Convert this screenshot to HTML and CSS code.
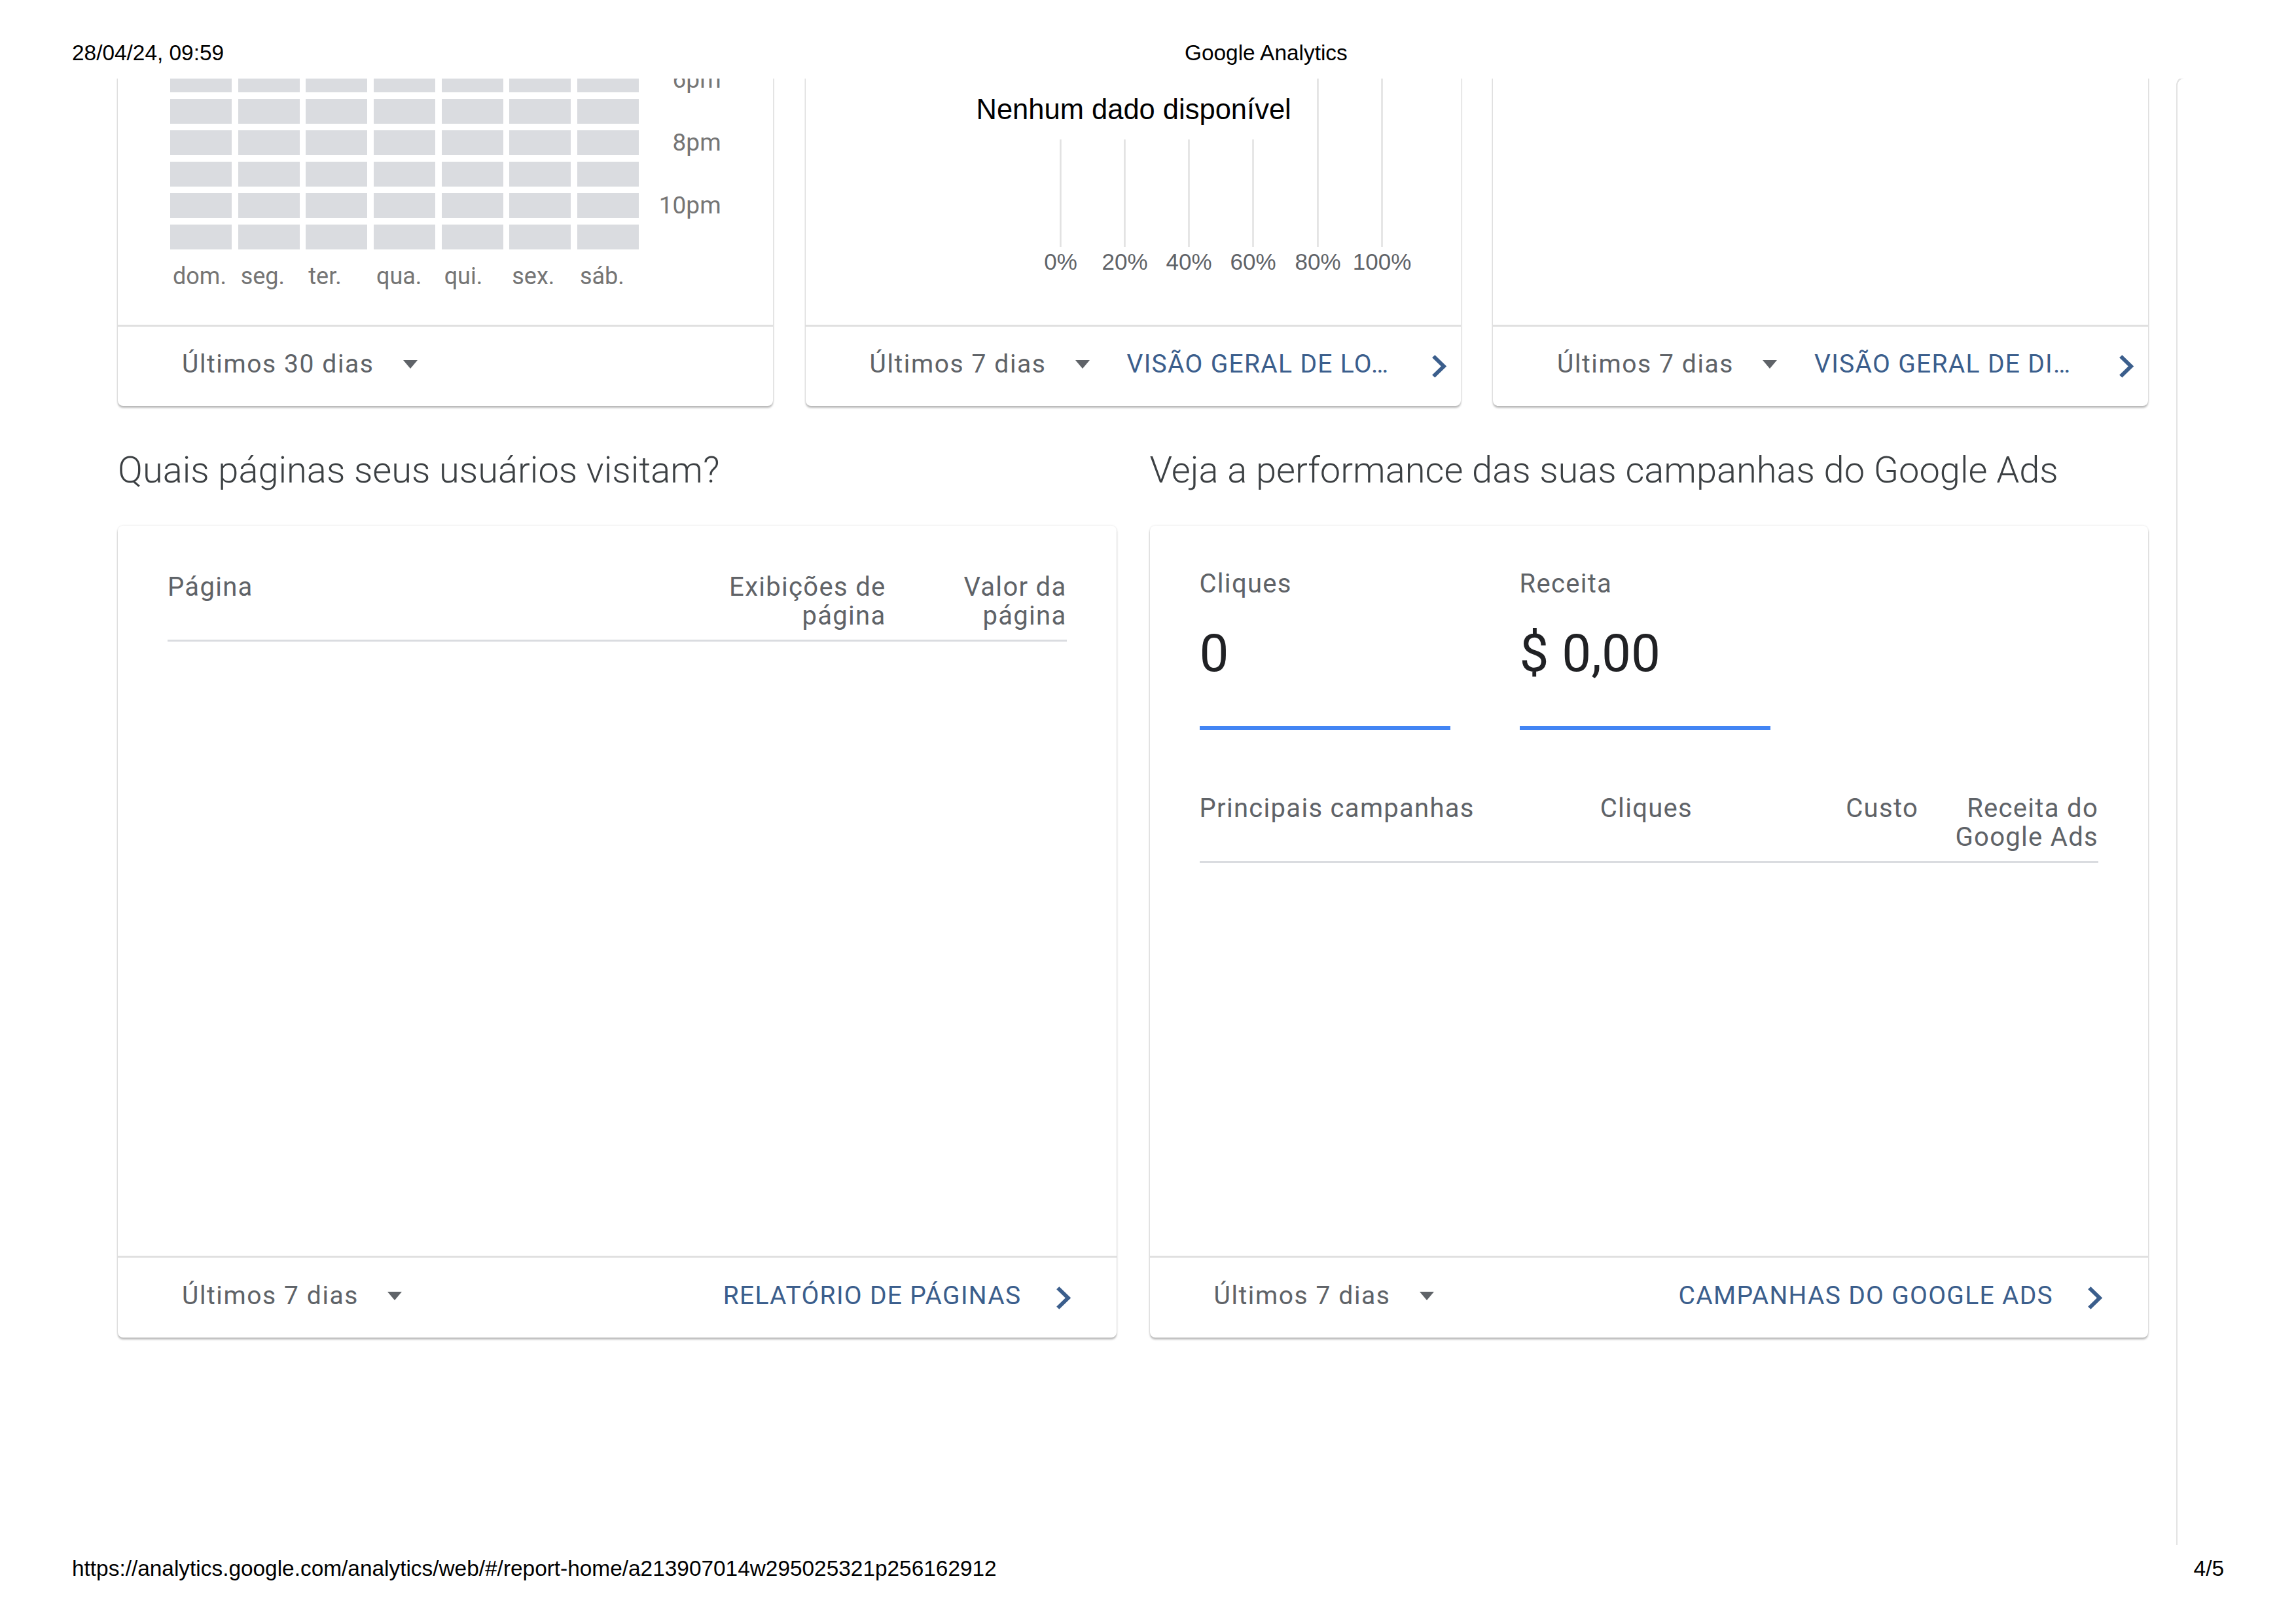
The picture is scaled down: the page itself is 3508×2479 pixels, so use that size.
FILE: index.html
```html
<!DOCTYPE html>
<html lang="pt-BR">
<head>
<meta charset="utf-8">
<title>Google Analytics</title>
<link rel="stylesheet" href="styles.css">
</head>
<body>
<header class="print-head">
  <span>28/04/24, 09:59</span>
  <span>Google Analytics</span>
</header>

<div class="viewport">
  <main class="dashboard">
    <section class="row-top">
      <article class="card">
        <div class="card-body heat-body">
          <div class="heat">
            <i class="cell"></i><i class="cell"></i><i class="cell"></i><i class="cell"></i><i class="cell"></i><i class="cell"></i><i class="cell"></i><span class="hour"></span>
            <i class="cell"></i><i class="cell"></i><i class="cell"></i><i class="cell"></i><i class="cell"></i><i class="cell"></i><i class="cell"></i><span class="hour"></span>
            <i class="cell"></i><i class="cell"></i><i class="cell"></i><i class="cell"></i><i class="cell"></i><i class="cell"></i><i class="cell"></i><span class="hour">6pm</span>
            <i class="cell"></i><i class="cell"></i><i class="cell"></i><i class="cell"></i><i class="cell"></i><i class="cell"></i><i class="cell"></i><span class="hour"></span>
            <i class="cell"></i><i class="cell"></i><i class="cell"></i><i class="cell"></i><i class="cell"></i><i class="cell"></i><i class="cell"></i><span class="hour">8pm</span>
            <i class="cell"></i><i class="cell"></i><i class="cell"></i><i class="cell"></i><i class="cell"></i><i class="cell"></i><i class="cell"></i><span class="hour"></span>
            <i class="cell"></i><i class="cell"></i><i class="cell"></i><i class="cell"></i><i class="cell"></i><i class="cell"></i><i class="cell"></i><span class="hour">10pm</span>
            <i class="cell"></i><i class="cell"></i><i class="cell"></i><i class="cell"></i><i class="cell"></i><i class="cell"></i><i class="cell"></i><span class="hour"></span>
          </div>
          <div class="days">
            <span>dom.</span><span>seg.</span><span>ter.</span><span>qua.</span><span>qui.</span><span>sex.</span><span>sáb.</span>
          </div>
        </div>
        <footer class="card-foot">
          <div class="range"><span class="range-text">Últimos 30 dias</span><i class="caret"></i></div>
        </footer>
      </article>

      <article class="card">
        <div class="card-body chart-body">
          <svg class="bar-chart" width="1001" height="537" viewBox="0 0 1001 537">
            <g stroke="#e0e0e0" stroke-width="2.5">
              <line x1="389.5" y1="0" x2="389.5" y2="418"/>
              <line x1="487.5" y1="0" x2="487.5" y2="418"/>
              <line x1="585.5" y1="0" x2="585.5" y2="418"/>
              <line x1="683.5" y1="0" x2="683.5" y2="418"/>
              <line x1="782.5" y1="0" x2="782.5" y2="418"/>
              <line x1="880.5" y1="0" x2="880.5" y2="418"/>
            </g>
            <rect x="240" y="0" width="520" height="254" fill="#fff"/>
            <text class="chart-empty" x="260.5" y="223">Nenhum dado disponível</text>
            <g class="chart-axis" text-anchor="middle">
              <text x="389.5" y="453">0%</text>
              <text x="487.5" y="453">20%</text>
              <text x="585.5" y="453">40%</text>
              <text x="683.5" y="453">60%</text>
              <text x="782.5" y="453">80%</text>
              <text x="880.5" y="453">100%</text>
            </g>
          </svg>
        </div>
        <footer class="card-foot">
          <div class="range"><span class="range-text">Últimos 7 dias</span><i class="caret"></i></div>
          <a class="link link-trunc">VISÃO GERAL DE LO…</a>
          <svg class="chev chev-end" viewBox="8.2 5.6 8.4 12.8" preserveAspectRatio="none"><path d="M10 6L8.59 7.41 13.17 12l-4.58 4.59L10 18l6-6z"/></svg>
        </footer>
      </article>

      <article class="card">
        <div class="card-body"></div>
        <footer class="card-foot">
          <div class="range"><span class="range-text">Últimos 7 dias</span><i class="caret"></i></div>
          <a class="link link-trunc">VISÃO GERAL DE DI…</a>
          <svg class="chev chev-end" viewBox="8.2 5.6 8.4 12.8" preserveAspectRatio="none"><path d="M10 6L8.59 7.41 13.17 12l-4.58 4.59L10 18l6-6z"/></svg>
        </footer>
      </article>
    </section>

    <section class="row-bottom">
      <div class="col">
        <h2 class="section-title">Quais páginas seus usuários visitam?</h2>
        <article class="card">
          <div class="card-body big-body pages-body">
            <div class="thead pages-head">
              <span>Página</span>
              <span class="th-num">Exibições de página</span>
              <span class="th-num th-pad">Valor da página</span>
            </div>
          </div>
          <footer class="card-foot">
            <div class="range"><span class="range-text">Últimos 7 dias</span><i class="caret"></i></div>
            <a class="link link-end">RELATÓRIO DE PÁGINAS</a>
            <svg class="chev chev-after" viewBox="8.2 5.6 8.4 12.8" preserveAspectRatio="none"><path d="M10 6L8.59 7.41 13.17 12l-4.58 4.59L10 18l6-6z"/></svg>
          </footer>
        </article>
      </div>

      <div class="col">
        <h2 class="section-title">Veja a performance das suas campanhas do Google Ads</h2>
        <article class="card">
          <div class="card-body big-body ads-body">
            <div class="scorecards">
              <div class="score">
                <div class="score-label">Cliques</div>
                <div class="score-value">0</div>
                <div class="score-bar"></div>
              </div>
              <div class="score">
                <div class="score-label">Receita</div>
                <div class="score-value">$ 0,00</div>
                <div class="score-bar"></div>
              </div>
            </div>
            <div class="thead ads-head">
              <span>Principais campanhas</span>
              <span class="th-num">Cliques</span>
              <span class="th-num">Custo</span>
              <span class="th-num">Receita do Google Ads</span>
            </div>
          </div>
          <footer class="card-foot">
            <div class="range"><span class="range-text">Últimos 7 dias</span><i class="caret"></i></div>
            <a class="link link-end">CAMPANHAS DO GOOGLE ADS</a>
            <svg class="chev chev-after" viewBox="8.2 5.6 8.4 12.8" preserveAspectRatio="none"><path d="M10 6L8.59 7.41 13.17 12l-4.58 4.59L10 18l6-6z"/></svg>
          </footer>
        </article>
      </div>
    </section>
  </main>
  <div class="side-card"></div>
</div>

<footer class="print-foot">
  <span>https://analytics.google.com/analytics/web/#/report-home/a213907014w295025321p256162912</span>
  <span>4/5</span>
</footer>
</body>
</html>
```

FILE: styles.css
```css
* { box-sizing: border-box; }

html, body {
  margin: 0;
  padding: 0;
}

body {
  width: 3508px;
  height: 2479px;
  overflow: hidden;
  background: #fff;
  font-family: Roboto, "Liberation Sans", Arial, sans-serif;
}

/* print header / footer */
.print-head {
  height: 120px;
  padding: 62px 110px 0;
  display: grid;
  grid-template-columns: 1700px 1fr;
  font: 33.4px/38px "Liberation Sans", Arial, sans-serif;
  color: #000;
}

.print-foot {
  height: 119px;
  padding: 17px 110px 0;
  display: flex;
  justify-content: space-between;
  font: 33.4px/38px "Liberation Sans", Arial, sans-serif;
  color: #000;
}

/* scrolled viewport */
.viewport {
  height: 2240px;
  overflow: hidden;
  display: flex;
  align-items: flex-start;
  padding-left: 180px;
}

.dashboard {
  width: 3102px;
  flex: none;
  display: flex;
  flex-direction: column;
}

.side-card {
  flex: none;
  width: 300px;
  height: 2400px;
  margin-left: 43px;
  margin-top: -2px;
  border-left: 2px solid #e3e3e3;
  border-top: 2px solid #e3e3e3;
  border-top-left-radius: 12px;
  background: #fff;
}

/* cards */
.card {
  background: #fff;
  border-radius: 8px;
  box-shadow: 0 3px 3px rgba(0, 0, 0, 0.26), 0 0 3px rgba(0, 0, 0, 0.12);
  display: flex;
  flex-direction: column;
}

.card-foot {
  border-top: 3px solid #e0e0e0;
  display: flex;
  align-items: center;
  padding-left: 98px;
}

.row-top {
  display: grid;
  grid-template-columns: repeat(3, 1fr);
  column-gap: 49.5px;
  margin-top: -161px;
}

.row-top .card-body { height: 537px; }
.row-top .card-foot { height: 124px; padding-right: 20px; }

.row-bottom {
  display: grid;
  grid-template-columns: 1fr 1fr;
  column-gap: 51px;
  margin-top: 66px;
}

.row-bottom .card-foot { height: 125px; padding-right: 68px; }

.section-title {
  margin: 0 0 53px;
  font-size: 56px;
  line-height: 64px;
  font-weight: 300;
  color: #3c4043;
}

/* footer controls */
.range {
  display: flex;
  align-items: center;
  color: #5f6368;
  font-size: 39px;
  letter-spacing: 1.6px;
  white-space: nowrap;
}

.range-text { margin-bottom: 7px; }

.caret {
  width: 0;
  height: 0;
  margin-left: 44px;
  margin-bottom: 6px;
  border-left: 11px solid transparent;
  border-right: 11px solid transparent;
  border-top: 13px solid #5f6368;
}

.link {
  color: #3b5e8c;
  font-size: 39px;
  letter-spacing: 1.3px;
  white-space: nowrap;
  margin-bottom: 7px;
  text-decoration: none;
}

.link-trunc { margin-left: 57px; }
.link-end { margin-left: auto; }

.chev {
  width: 25px;
  height: 37px;
  flex: none;
  fill: #3b5e8c;
}

.chev-end { margin-left: auto; }
.chev-after { margin-left: 52px; }

/* heatmap */
.heat-body { padding: 48px 0 0 80px; }

.heat {
  display: grid;
  grid-template-columns: repeat(7, 94px) 116px;
  grid-auto-rows: 38px;
  column-gap: 9.67px;
  row-gap: 10px;
}

.cell { background: #dadce0; }

.hour {
  font-size: 37px;
  line-height: 38px;
  color: #757575;
  text-align: right;
}

.days {
  display: grid;
  grid-template-columns: repeat(7, 94px);
  column-gap: 9.67px;
  margin-top: 19px;
  font-size: 36px;
  line-height: 44px;
  color: #757575;
}

.days span { padding-left: 4px; }

/* bar chart */
.bar-chart { display: block; }

.chart-empty {
  font-family: "Liberation Sans", Arial, sans-serif;
  font-size: 43.5px;
  fill: #000;
}

.chart-axis text {
  font-family: "Liberation Sans", Arial, sans-serif;
  font-size: 35px;
  fill: #5f6368;
}

/* big cards */
.big-body { height: 1115px; padding: 72px 76px 0; }
.ads-body { padding-top: 67px; }

.thead {
  display: grid;
  border-bottom: 3px solid #dadce0;
  padding-bottom: 14px;
  font-size: 40px;
  line-height: 44px;
  color: #5f6368;
  letter-spacing: 1.3px;
}

.pages-head { grid-template-columns: 1fr 250px 276px; }
.ads-head { grid-template-columns: 1fr 200px 345px 275px; margin-top: 98px; }

.th-num { text-align: right; }
.th-pad { padding-left: 60px; }

.scorecards { display: flex; gap: 106px; }

.score { width: 383px; }

.score-label {
  font-size: 40px;
  line-height: 44px;
  color: #5f6368;
  letter-spacing: 1.3px;
}

.score-value {
  margin-top: 37px;
  font-size: 80px;
  line-height: 94px;
  color: #202124;
}

.score-bar {
  margin-top: 64px;
  height: 6px;
  background: #4285f4;
}
```
